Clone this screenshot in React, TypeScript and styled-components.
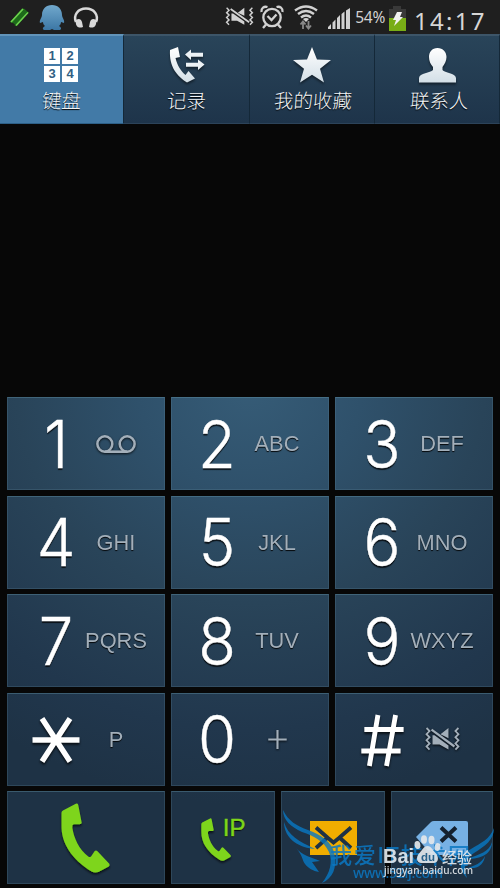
import React from "react";
import styled, { createGlobalStyle } from "styled-components";

const Global = createGlobalStyle`
  body { margin: 0; background: #070707; }
  * { box-sizing: border-box; }
  svg { display: block; overflow: visible; flex: none; }
`;

const Screen = styled.main`
  position: relative;
  width: 500px;
  height: 888px;
  overflow: hidden;
  background: #070707;
  display: flex;
  flex-direction: column;
  font-family: "Liberation Sans", "Noto Sans CJK SC", sans-serif;
`;

const StatusBar = styled.header`
  height: 34px;
  flex: none;
  background: #1f1f1f;
  display: flex;
  align-items: center;
  justify-content: space-between;
`;

const Percent = styled.span`
  font: 400 15.5px/20px "Noto Sans", sans-serif;
  letter-spacing: -0.3px;
  color: #d2d2d2;
`;

const Clock = styled.span`
  font: 400 24px/30px "Noto Sans", sans-serif;
  letter-spacing: 2.3px;
  color: #d6d6d6;
  padding-top: 8px;
  width: 86px;
`;

const StatusRight = styled.div`
  display: flex;
  align-items: center;
  height: 34px;
`;

const Tabs = styled.nav`
  flex: none;
  height: 90px;
  display: grid;
  grid-template-columns: 124px 126px 125px 125px;
`;

const Tab = styled.button<{ $active?: boolean }>`
  border: 0;
  border-top: 2px solid ${(p) => (p.$active ? "#6294b9" : "#3d5568")};
  border-right: 1px solid #142838;
  border-bottom: 1px solid ${(p) => (p.$active ? "#2d5f86" : "#2c4359")};
  background: ${(p) => (p.$active ? "#427aa7" : "linear-gradient(#294459, #1e344a)")};
  padding: 10px 0 0;
  display: flex;
  flex-direction: column;
  align-items: center;
  svg { filter: drop-shadow(0 2px 1px rgba(0, 0, 0, 0.45)); }
`;

const TabLabel = styled.span<{ $indent?: number }>`
  font: 300 19.5px/24px "Noto Sans CJK SC", sans-serif;
  color: #f2f5f7;
  margin-top: 4px;
  padding-left: ${(p) => p.$indent ?? 0}px;
  text-shadow: 0 1px 1px #000;
  white-space: nowrap;
  transform: skewX(-4deg);
`;

const Pad = styled.section`
  margin-top: 273px;
  padding: 0 7px;
  display: flex;
  flex-direction: column;
  gap: 5.5px;
`;

const KeyRow = styled.div<{ $cols: string }>`
  display: grid;
  grid-template-columns: ${(p) => p.$cols};
  column-gap: 6px;
  height: 93px;
`;

const Key = styled.button<{ $nudge?: number }>`
  border: 1px solid rgba(100, 140, 160, 0.23);
  border-top-color: rgba(100, 150, 170, 0.4);
  background: radial-gradient(ellipse 450px 420px at 250px 385px, #365c77 0, #2f516b 25%, #294459 52%, #21374d 82%, #1e3245 100%) fixed;
  padding: 0 0 0 ${(p) => 17 + (p.$nudge ?? 0)}px;
  display: flex;
  align-items: center;
  overflow: hidden;
`;

const ActionKey = styled(Key)`
  padding: 0;
  justify-content: center;
`;

const Digit = styled.span`
  width: 58px;
  flex: none;
  display: flex;
  justify-content: center;
  padding-top: 2px;
  font: 300 65.5px/90px Inter, sans-serif;
  color: #fff;
  -webkit-text-stroke: 0.4px #fff;
  text-shadow: 0 2px 1px rgba(0, 0, 0, 0.75);
  transform: scaleX(0.94);
  svg { filter: drop-shadow(0 2px 1px rgba(0, 0, 0, 0.7)); }
`;

const Letters = styled.span`
  width: 62px;
  flex: none;
  display: flex;
  justify-content: center;
  padding-top: 1px;
  font: 400 22.5px/30px "Liberation Sans", sans-serif;
  color: #a3afba;
  text-shadow: 0 1px 1px rgba(0, 0, 0, 0.9);
  white-space: nowrap;
  transform: scaleX(0.97);
  svg { filter: drop-shadow(0 1px 1px rgba(0, 0, 0, 0.8)); }
`;

const IpCall = styled.span`
  display: flex;
  align-items: flex-start;
  color: #7ed51b;
  font: 400 24px/26px "Liberation Sans", sans-serif;
  text-shadow: 0 1px 1px #000;
  -webkit-text-stroke: 0.5px #7ed51b;
  svg { margin: 3px -8px 0 0; }
`;

const Watermark = styled.div`
  position: absolute;
  left: 280px;
  top: 806px;
  width: 220px;
  height: 82px;
`;

const Voicemail = () => (
  <svg width="42" height="19" viewBox="0 0 42 19" fill="none" stroke="#a3afba" strokeWidth="2.6">
    <circle cx="9.5" cy="9" r="7.7" />
    <circle cx="32.5" cy="9" r="7.7" />
    <path d="M9.5 16.7h23" />
  </svg>
);

const VibrateMute = ({ w, color }: { w: number; color: string }) => (
  <svg width={w} height={(w * 24) / 36} viewBox="0 0 36 24">
    <g fill="none" stroke={color} strokeWidth="1.8">
      <path d="M2 1l3 3-3 3 3 3-3 3 3 3-3 3 3 3M34 1l-3 3 3 3-3 3 3 3-3 3 3 3-3 3" />
      <path d="M7 2.5L30 19" strokeWidth="2.2" />
    </g>
    <path d="M8 8l2 0 14 10v4l-9-5H8zM16 7l8-6v10z" fill={color} />
  </svg>
);

const handset =
  "M.5 10Q.5 8.500 2 7.500L15 .7Q17 0 17.500 2L21 20Q21 21.500 19 21.500H13Q11 22 11.500 25C13 35 18 47 28 54.500Q30 55.500 31 53.500L34 49Q35.500 47.500 37 49L49 61.500Q50 63 48.500 64.500L38 70Q34 71 31 69.500C11 57 0 41 .5 22Z";

const Handset = ({ h }: { h: number }) => (
  <svg width={(h * 50) / 71} height={h} viewBox="0 0 50 71" filter="url(#drop)">
    <path d={handset} fill="#7ed51b" />
  </svg>
);

const Star = () => (
  <svg width="38" height="36" viewBox="0 0 38 36">
    <path d="M19 0l5 12.500 14 .5-11 8.800 4 13.700-12-7.700-12 7.700 4-13.700L0 13l14-.5z" fill="url(#metal)" />
  </svg>
);

const Person = () => (
  <svg width="37" height="36" viewBox="0 0 37 36">
    <path d="M18.500 1C24 1 27.500 5 27.500 10c0 4-2 7-4 10v3c2 3 13 3 13.500 8v4.500H0V31c.5-5 11.500-5 14-8v-3c-2.500-3-4-6-4-10 0-5 3-9 8.500-9z" fill="url(#metal)" />
  </svg>
);

const LogIcon = () => (
  <svg width="36" height="36" viewBox="0 0 36 36">
    <path d="M1 3L9 0l2 10-4.500 1C8 18 12 24 16.500 28l3-4 6.500 7.500-8 4C8 29 0 20 1 3z" fill="url(#metal)" />
    <path d="M16 7.500l6-5v3.300h12v4H22V13zM35.500 17.500l-6.500-5v3.300H17v4h12V23z" fill="#edf2f5" />
  </svg>
);

const DigitTile = styled.span`
  background: #fff;
  color: #315f84;
  display: grid;
  place-items: center;
  font: 700 13px/16px "Liberation Sans", sans-serif;
`;

const TileGrid = styled.span`
  display: grid;
  grid-template-columns: 16px 16px;
  grid-auto-rows: 16px;
  gap: 2px;
  height: 34px;
  margin-right: 1px;
`;

const TabIcon = styled.span`
  height: 38px;
  display: flex;
  align-items: center;
`;

const Asterisk = () => (
  <svg width="50" height="46" viewBox="0 0 47 46" preserveAspectRatio="none" stroke="#fff" strokeWidth="5.500">
    <path d="M0 23h47M9.500 1.500l28 43M37.500 1.500l-28 43" />
  </svg>
);

const Hash = () => (
  <svg width="45" height="51" viewBox="0 0 42 51" preserveAspectRatio="none" stroke="#fff" strokeWidth="4.800">
    <path d="M3 14.500h39M0 36h39M16.500 0L8 51M34 0l-9 51" />
  </svg>
);

const Plus = () => (
  <svg width="19" height="19" viewBox="0 0 19 19" stroke="#a3afba" strokeWidth="2.200">
    <path d="M0 9.500h19M9.500 0v19" />
  </svg>
);

const StatusLeftIcons = () => (
  <svg width="110" height="34" viewBox="0 0 110 34">
    <path d="M10 22L22 8.500l3 .5L13 23zM14.500 25.500L26 12l3 0-12 14z" fill="#247b1b" />
    <path d="M12.500 22.500L24.500 9L28 12 16.500 26z" fill="#1d6a1a" />
    <path d="M11 22L23 9M16 25.500L28 12.500" stroke="#6ed14f" strokeWidth="1.500" />
    <path d="M52 5c-6 0-10 4-10 10 0 3-3 5-2 8l3-1c0 2 1 3 2 4-2 1-3 3-1 4h6l2-1 2 1h6c2-1 1-3-1-4 1-1 2-2 2-4l3 1c1-3-2-5-2-8 0-6-4-10-10-10z" fill="url(#qq)" />
    <path d="M76 22c-3-7 2-13.500 10-13.500s13 6.500 10 13.500" fill="none" stroke="#d9d9d9" strokeWidth="2.500" />
    <path d="M76 20c3-2 5-1 6 2l1 5c-5 2-8-1-7-7zM96 20c-3-2-5-1-6 2l-1 5c5 2 8-1 7-7z" fill="#d9d9d9" />
  </svg>
);

const Alarm = () => (
  <svg width="24" height="24" viewBox="0 0 24 24" fill="none" stroke="#d2d2d2" strokeWidth="2.300">
    <circle cx="12" cy="12.500" r="8.700" />
    <path d="M7.500 11l4 4 5-5.500M6 19.500l-3 3.500M18 19.500l3 3.500M1.500 7C1 3 4 1 7.500 2M22.500 7C23 3 20 1 16.500 2" />
  </svg>
);

const Wifi = () => (
  <svg width="24" height="25" viewBox="0 0 24 25">
    <g fill="none" stroke="#d2d2d2" strokeWidth="2.400">
      <path d="M1 5.500Q12-2.500 23 5.500M4 9Q12 3 20 9M7 12.500Q12 8.500 17 12.500" />
    </g>
    <path d="M9 14q3-2 6 0l-3 3z" fill="#d2d2d2" />
    <path d="M9 24v-7M6.500 19.500L9 16.500l2.500 3M14.500 16v7M12 20.500l2.500 3 2.500-3" fill="none" stroke="#888" strokeWidth="1.800" />
  </svg>
);

const Signal = () => (
  <svg width="22" height="21" viewBox="0 0 22 21" fill="#d2d2d2">
    <path d="M0 21v-2l3-3v5zM4.500 21v-6.500l3-3V21zM9 21V10l3-3v14zM13.500 21V6l3-2.500V21zM18 21V2.500L22 0v21z" />
  </svg>
);

const Battery = () => (
  <svg width="17" height="25" viewBox="0 0 17 25">
    <path d="M4 0h8v3h5v9H0V3h4z" fill="#393939" />
    <path d="M0 12h17v13H0z" fill="#78ad16" />
    <path d="M8 6h5l-2 5h3L5 20l2-6H4z" fill="#f2f2f2" />
  </svg>
);

const Shift = styled.span<{ $x?: number; $top?: number }>`
  display: flex;
  margin-left: ${(p) => p.$x ?? 0}px;
  padding-top: ${(p) => p.$top ?? 0}px;
`;

const Envelope = () => (
  <svg width="47" height="34" viewBox="0 0 47 34">
    <path d="M0 0h47v34H0z" fill="#f0ad00" />
    <path d="M6 6.500l12 10.500 5.500 4.500L29 17 41 6.500M6 27l11-10M41 27L30 17" fill="none" stroke="#1e3245" strokeWidth="3.800" />
  </svg>
);

const Backspace = () => (
  <svg width="52" height="34" viewBox="0 0 52 34">
    <path d="M0 16L15 1q1-1 3-1h32q2 0 2 2v30q0 2-2 2H18q-2 0-3-1z" fill="#77b1e4" />
    <path d="M25 6.500L40 20.500M40 6.500L25 20.500" stroke="#14212f" strokeWidth="4" />
  </svg>
);

const keys: { d: React.ReactNode; s: React.ReactNode }[][] = [
  [{ d: "1", s: <Voicemail /> }, { d: "2", s: "ABC" }, { d: "3", s: "DEF" }],
  [{ d: "4", s: "GHI" }, { d: "5", s: "JKL" }, { d: "6", s: "MNO" }],
  [{ d: "7", s: "PQRS" }, { d: "8", s: "TUV" }, { d: "9", s: "WXYZ" }],
  [{ d: <Asterisk />, s: "P" }, { d: "0", s: <Plus /> }, { d: <Hash />, s: <VibrateMute w={37} color="#a3afba" /> }],
];

const Marks = () => (
  <svg width="220" height="82" viewBox="0 0 220 82">
    <g fill="#0878c4" opacity="0.8">
      <path d="M3 4C8 15 17 20 28 24C42 29 52 36 54.500 48C57 62 53 72 42 77C50 67 53 56 49 46C44 35 34 30 22 26C11 21 3 14 3 4z" />
      <path d="M4 16c4 14 15 19 31 27-14-1-31-9-31-27zM16 42c6 7 14 9 24 13l-8 1 7 10c-6-1-11-4-14-8-3-4-2-8-9-16z" />
      <path d="M214 22c-4 11-13 15-23 21-11 7-14 19-4 29-4-11-2-19 7-25 11-7 20-13 20-25z" />
      <path d="M212 36c-3 10-12 12-25 17 14 0 25-5 25-17zM205 50c-4 8-10 9-17 12l6 0c6-1 10-5 11-12z" />
    </g>
    <text x="50" y="57" fill="#0b78c3" opacity="0.85" fontFamily="Noto Sans CJK SC, sans-serif" fontSize="22" fontWeight="500" textLength="140">我爱IT技术网</text>
    <text x="73" y="72" fill="#0b78c3" opacity="0.85" fontFamily="Noto Sans, sans-serif" fontSize="14" fontWeight="500" textLength="90">www.52ij.com</text>
    <g fill="#e3e8ec" opacity="0.92">
      <text x="103" y="57" fontFamily="Liberation Sans, sans-serif" fontWeight="700" fontSize="20" textLength="31">Bai</text>
      <ellipse cx="137.500" cy="39" rx="2.900" ry="4" transform="rotate(-10 137.500 39)" />
      <ellipse cx="144" cy="33.500" rx="3" ry="4.200" />
      <ellipse cx="151.500" cy="34" rx="3" ry="4.200" />
      <ellipse cx="157.500" cy="41" rx="2.900" ry="4" transform="rotate(15 157.500 41)" />
      <path d="M147.500 40c-4 0-5 4-8 7-4 4-3 10 2 10h12c5 0 6-6 2-10-3-3-4-7-8-7z" />
      <text x="141" y="55" fontFamily="Liberation Sans, sans-serif" fontWeight="700" fontSize="11.500" fill="#2a6590">du</text>
      <text x="162" y="56.500" fontFamily="Noto Sans CJK SC, sans-serif" fontSize="15" fontWeight="500" textLength="30">经验</text>
      <text x="104" y="68" fontFamily="Noto Sans, sans-serif" fontSize="10.500" fontWeight="500" textLength="89" lengthAdjust="spacingAndGlyphs">jingyan.baidu.com</text>
    </g>
  </svg>
);

const Defs = styled.svg`
  position: absolute;
`;

export default function App() {
  return (
    <Screen>
      <Global />
      <Defs width="0" height="0">
        <linearGradient id="metal" x2="0" y2="1">
          <stop stopColor="#fff" />
          <stop offset="1" stopColor="#d3dfe7" />
        </linearGradient>
        <linearGradient id="qq" x2="0" y2="1">
          <stop stopColor="#71a8cc" />
          <stop offset="1" stopColor="#3c77a5" />
        </linearGradient>
        <filter id="drop" x="-10%" y="-10%" width="120%" height="120%">
          <feDropShadow dx="0" dy="2" stdDeviation="0.8" floodOpacity="0.65" />
        </filter>
      </Defs>
      <StatusBar>
        <StatusLeftIcons />
        <StatusRight>
          <Shift><VibrateMute w={29} color="#d2d2d2" /></Shift>
          <Shift $x={6}><Alarm /></Shift>
          <Shift $x={10}><Wifi /></Shift>
          <Shift $x={10} $top={3}><Signal /></Shift>
          <Shift $x={5}><Percent>54%</Percent></Shift>
          <Shift $x={4} $top={2}><Battery /></Shift>
          <Shift $x={8}><Clock>14:17</Clock></Shift>
        </StatusRight>
      </StatusBar>
      <Tabs>
        <Tab $active>
          <TabIcon>
            <TileGrid>{["1", "2", "3", "4"].map((n) => <DigitTile key={n}>{n}</DigitTile>)}</TileGrid>
          </TabIcon>
          <TabLabel>键盘</TabLabel>
        </Tab>
        <Tab><TabIcon><LogIcon /></TabIcon><TabLabel $indent={1}>记录</TabLabel></Tab>
        <Tab><TabIcon><Star /></TabIcon><TabLabel $indent={3}>我的收藏</TabLabel></Tab>
        <Tab><TabIcon><Person /></TabIcon><TabLabel $indent={4}>联系人</TabLabel></Tab>
      </Tabs>
      <Pad>
        {keys.map((row, r) => (
          <KeyRow key={r} $cols="158px 158px 158px">
            {row.map((k, c) => (
              <Key key={c} $nudge={[2, -1, -0.5][c]}>
                <Digit>{k.d}</Digit>
                <Letters>{k.s}</Letters>
              </Key>
            ))}
          </KeyRow>
        ))}
        <KeyRow $cols="158px 104px 104px 102px">
          <ActionKey><Handset h={70} /></ActionKey>
          <ActionKey><IpCall><Handset h={43} />IP</IpCall></ActionKey>
          <ActionKey><Envelope /></ActionKey>
          <ActionKey><Backspace /></ActionKey>
        </KeyRow>
      </Pad>
      <Watermark><Marks /></Watermark>
    </Screen>
  );
}
